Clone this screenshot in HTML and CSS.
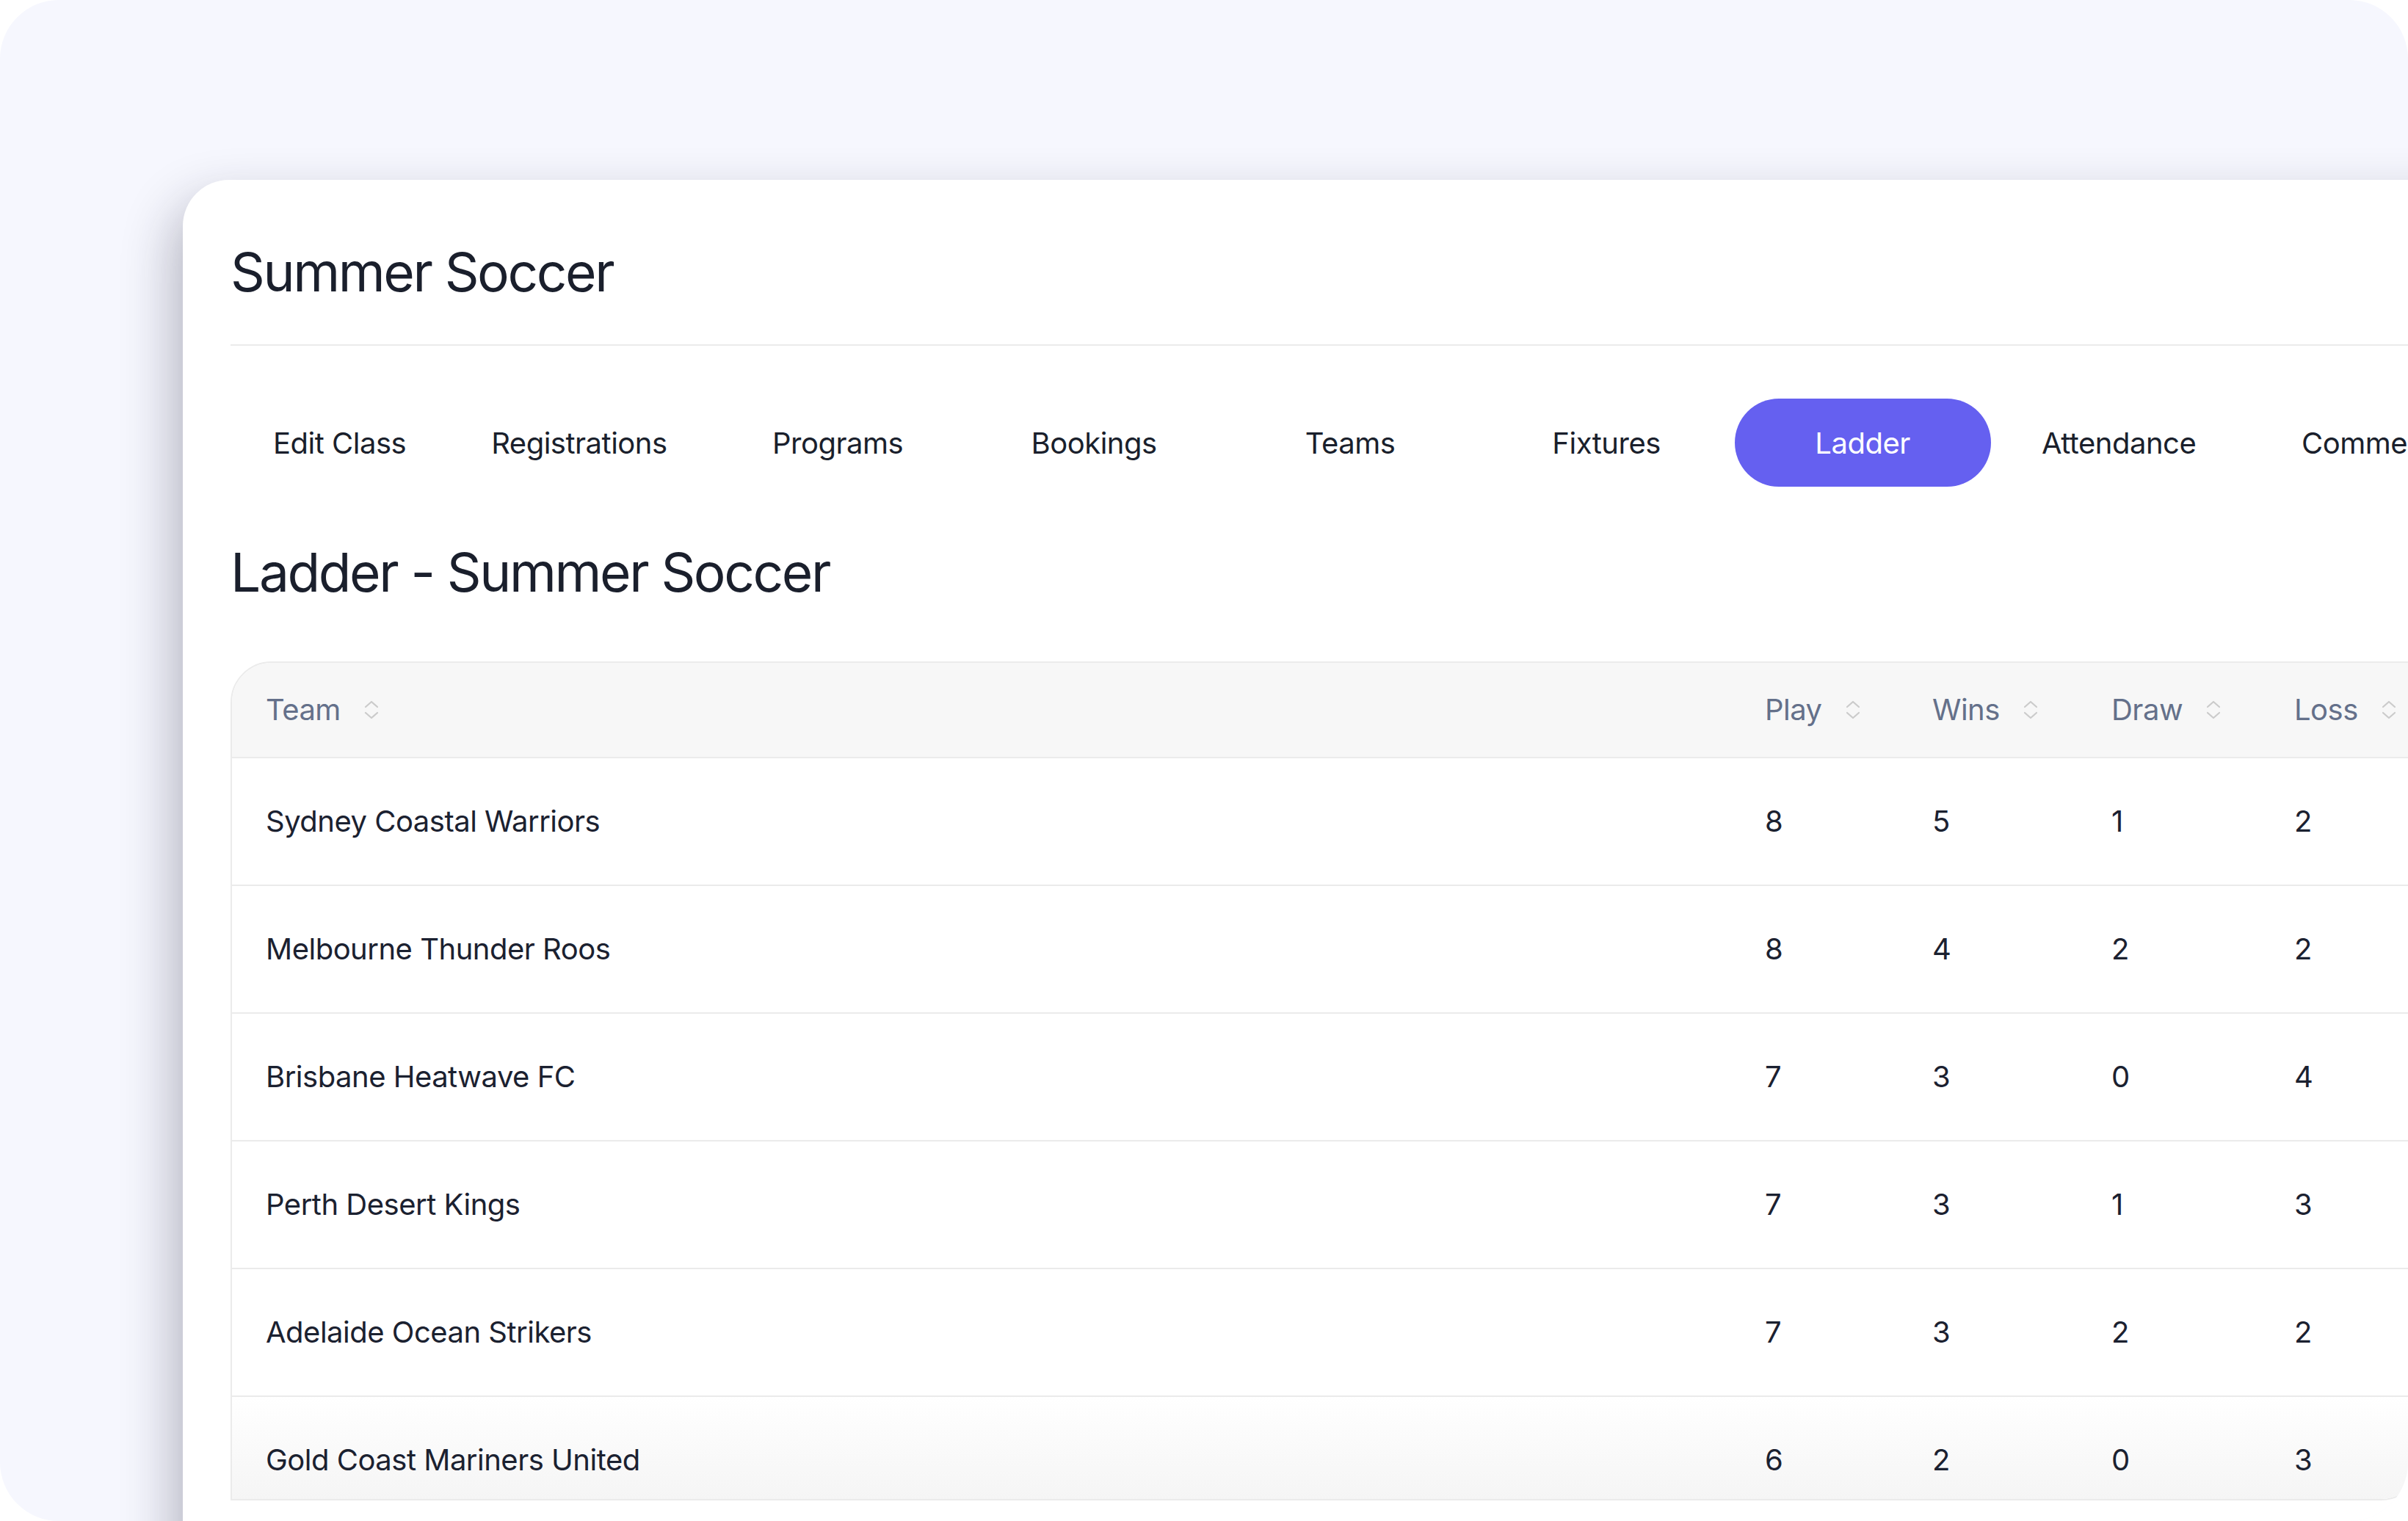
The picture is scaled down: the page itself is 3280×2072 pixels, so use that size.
FILE: index.html
```html
<!DOCTYPE html>
<html lang="en">
<head>
<meta charset="utf-8">
<title>Ladder - Summer Soccer</title>
<link rel="stylesheet" href="styles.css">
</head>
<body>
<div class="frame">
  <main class="card">
    <h1 class="title">Summer Soccer</h1>
    <hr class="rule">
    <nav class="tabs">
      <a class="tab">Edit Class</a>
      <a class="tab">Registrations</a>
      <a class="tab">Programs</a>
      <a class="tab">Bookings</a>
      <a class="tab">Teams</a>
      <a class="tab">Fixtures</a>
      <a class="tab tab-active">Ladder</a>
      <a class="tab">Attendance</a>
      <a class="tab">Comments</a>
    </nav>
    <h2 class="subtitle">Ladder - Summer Soccer</h2>
    <div class="table">
      <div class="row head">
        <div class="cell">Team <svg class="sort" viewBox="0 0 20 28"><path d="M2 10 L10 3 L18 10 M2 18 L10 25 L18 18"/></svg></div>
        <div class="cell">Play <svg class="sort" viewBox="0 0 20 28"><path d="M2 10 L10 3 L18 10 M2 18 L10 25 L18 18"/></svg></div>
        <div class="cell">Wins <svg class="sort" viewBox="0 0 20 28"><path d="M2 10 L10 3 L18 10 M2 18 L10 25 L18 18"/></svg></div>
        <div class="cell">Draw <svg class="sort" viewBox="0 0 20 28"><path d="M2 10 L10 3 L18 10 M2 18 L10 25 L18 18"/></svg></div>
        <div class="cell">Loss <svg class="sort" viewBox="0 0 20 28"><path d="M2 10 L10 3 L18 10 M2 18 L10 25 L18 18"/></svg></div>
      </div>
      <div class="row">
        <div class="cell">Sydney Coastal Warriors</div><div class="cell">8</div><div class="cell">5</div><div class="cell">1</div><div class="cell">2</div>
      </div>
      <div class="row">
        <div class="cell">Melbourne Thunder Roos</div><div class="cell">8</div><div class="cell">4</div><div class="cell">2</div><div class="cell">2</div>
      </div>
      <div class="row">
        <div class="cell">Brisbane Heatwave FC</div><div class="cell">7</div><div class="cell">3</div><div class="cell">0</div><div class="cell">4</div>
      </div>
      <div class="row">
        <div class="cell">Perth Desert Kings</div><div class="cell">7</div><div class="cell">3</div><div class="cell">1</div><div class="cell">3</div>
      </div>
      <div class="row">
        <div class="cell">Adelaide Ocean Strikers</div><div class="cell">7</div><div class="cell">3</div><div class="cell">2</div><div class="cell">2</div>
      </div>
      <div class="row row-last">
        <div class="cell">Gold Coast Mariners United</div><div class="cell">6</div><div class="cell">2</div><div class="cell">0</div><div class="cell">3</div>
      </div>
    </div>
  </main>
</div>
</body>
</html>
```
FILE: styles.css
```css
* { box-sizing: border-box; }

html, body {
  margin: 0;
  padding: 0;
  background: #ffffff;
  width: 3280px;
  height: 2072px;
  overflow: hidden;
  font-family: "Inter", "Noto Sans", "Liberation Sans", sans-serif;
  color: #1a1f2c;
}

.frame {
  width: 3280px;
  height: 2072px;
  background: #f6f7fe;
  border-radius: 80px;
  overflow: hidden;
  padding: 245px 0 0 249px;
}

.card {
  width: 3200px;
  height: 1960px;
  background: #ffffff;
  border-top-left-radius: 63px;
  box-shadow: -12px 30px 70px rgba(25, 25, 50, 0.3);
  padding: 82px 0 0 65px;
}

.title,
.subtitle {
  margin: 0;
  font-size: 73px;
  line-height: 88px;
  font-weight: 400;
  letter-spacing: -2.4px;
  color: #1a1f2c;
}

.rule {
  margin: 54px 0 0 0;
  border: 0;
  height: 2px;
  background: #ebebeb;
}

.tabs {
  display: flex;
  margin-top: 72px;
  height: 120px;
  white-space: nowrap;
}

.tab {
  flex-shrink: 0;
  display: flex;
  align-items: center;
  justify-content: center;
  min-width: 349px;
  padding: 0 58px;
  font-size: 40px;
  letter-spacing: -0.5px;
  color: #1a1f2c;
  border-radius: 60px;
}

.tab:first-child {
  min-width: 0;
}

.tab-active {
  background: #6560f0;
  color: #ffffff;
}

.subtitle {
  margin-top: 73px;
}

.table {
  margin-top: 77px;
  width: 2985px;
  border: 2px solid #ebebeb;
  border-radius: 56px 0 56px 0;
  overflow: hidden;
}

.row {
  display: grid;
  grid-template-columns: 1fr 228px 244px 249px 218px;
  height: 174px;
  border-top: 2px solid #ebebeb;
  font-size: 40px;
  line-height: 172px;
  letter-spacing: -0.5px;
  color: #1b2130;
}

.row .cell {
  padding-left: 46px;
  white-space: nowrap;
}

.head {
  height: 128px;
  border-top: 0;
  background: #f7f7f7;
  line-height: 128px;
  color: #64708a;
}

.head .cell {
  display: flex;
  align-items: center;
  gap: 32px;
}

.sort {
  width: 20px;
  height: 28px;
  fill: none;
  stroke: #cbcbcb;
  stroke-width: 2.2;
  stroke-linecap: round;
  stroke-linejoin: round;
}

.row-last {
  height: 141px;
  overflow: hidden;
  background: linear-gradient(180deg, #ffffff 0%, #f5f5f5 100%);
}
```
